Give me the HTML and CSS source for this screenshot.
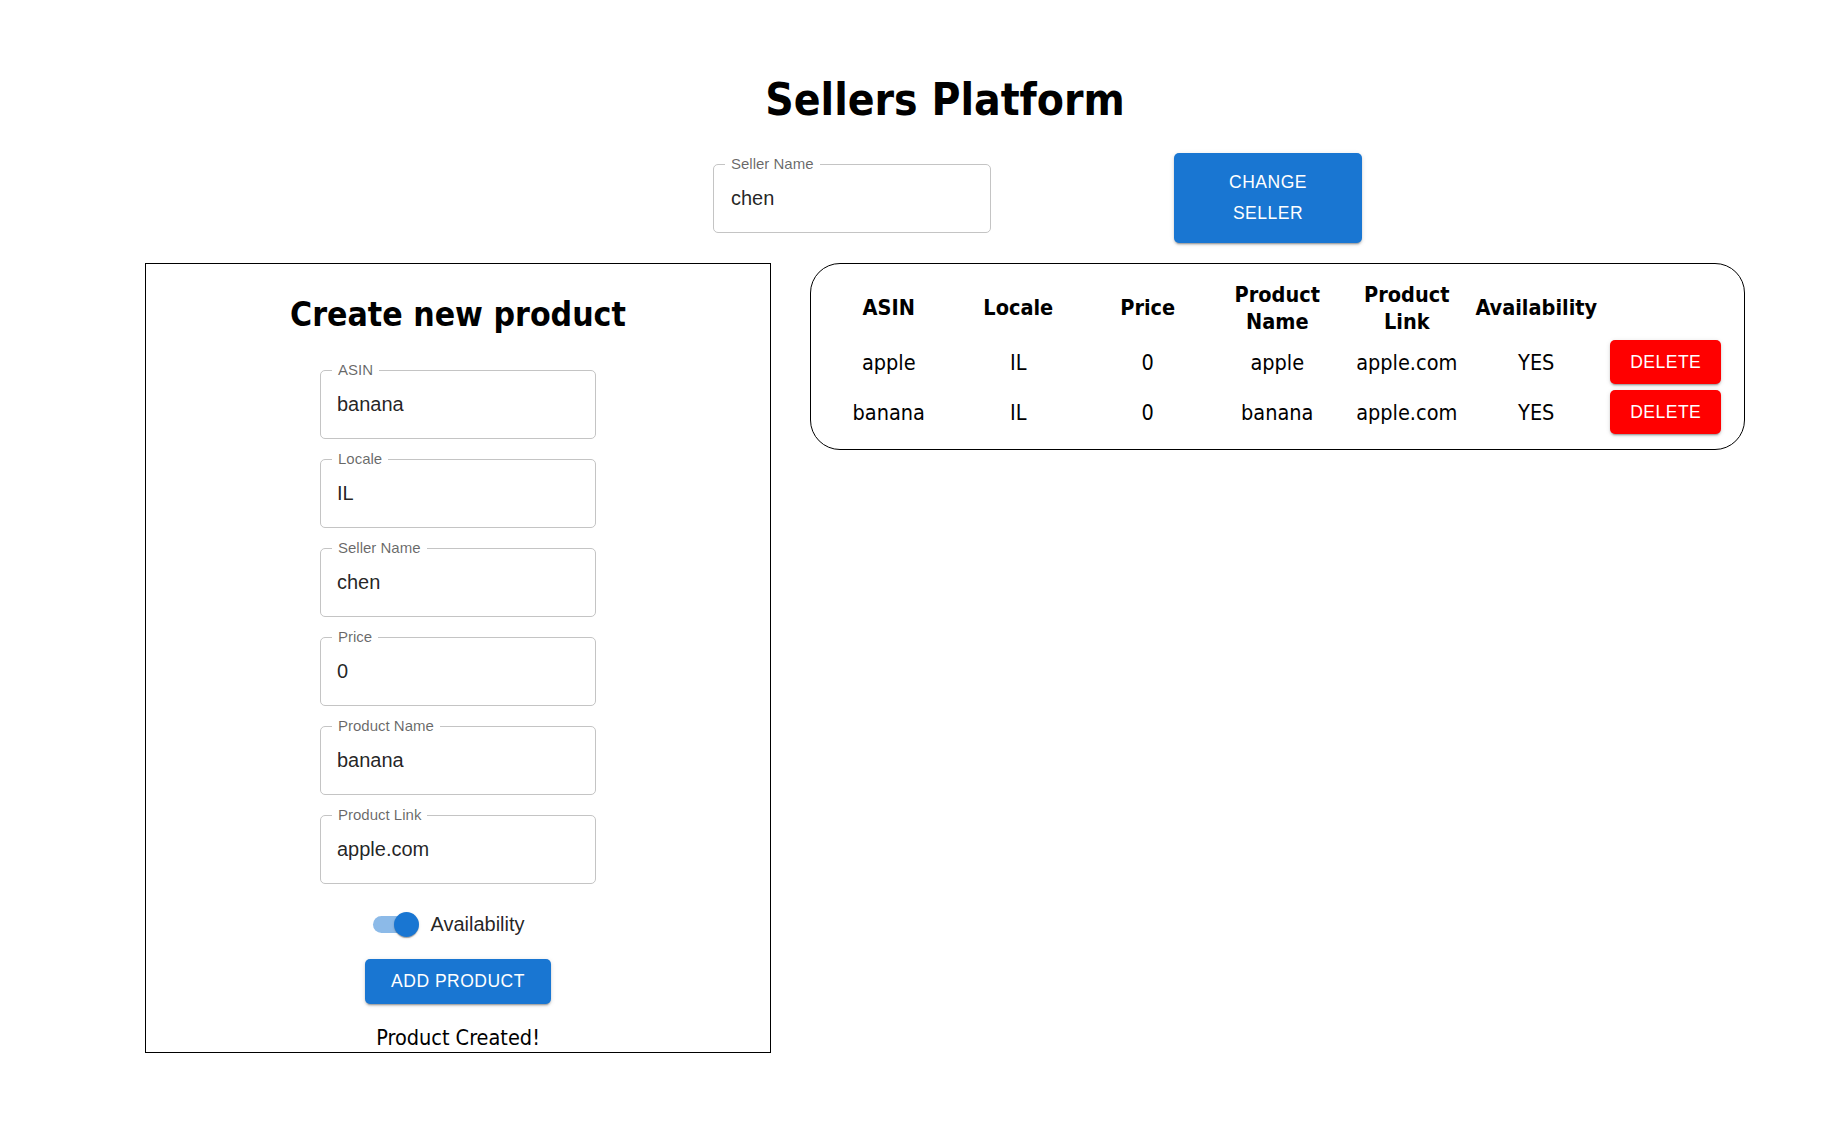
FILE: index.html
```html
<!DOCTYPE html>
<html lang="en">
<head>
<meta charset="utf-8">
<title>Sellers Platform</title>
<link rel="stylesheet" href="styles.css">
</head>
<body>
<div class="app">
  <h1 class="title">Sellers Platform</h1>
  <div class="seller-row">
    <div class="field field-top">
      <span class="field-label">Seller Name</span>
      <span class="field-value">chen</span>
    </div>
    <button class="btn btn-primary btn-change">CHANGE SELLER</button>
  </div>
  <div class="main-row">
    <section class="panel">
      <h2 class="panel-title">Create new product</h2>
      <div class="field"><span class="field-label">ASIN</span><span class="field-value">banana</span></div>
      <div class="field"><span class="field-label">Locale</span><span class="field-value">IL</span></div>
      <div class="field"><span class="field-label">Seller Name</span><span class="field-value">chen</span></div>
      <div class="field"><span class="field-label">Price</span><span class="field-value">0</span></div>
      <div class="field"><span class="field-label">Product Name</span><span class="field-value">banana</span></div>
      <div class="field"><span class="field-label">Product Link</span><span class="field-value">apple.com</span></div>
      <div class="switch-row">
        <span class="switch"><span class="switch-track"></span><span class="switch-thumb"></span></span>
        <span class="switch-label">Availability</span>
      </div>
      <button class="btn btn-primary btn-add">ADD PRODUCT</button>
      <p class="status">Product Created!</p>
    </section>
    <section class="table-card">
      <div class="grid">
        <div class="th">ASIN</div>
        <div class="th">Locale</div>
        <div class="th">Price</div>
        <div class="th">Product Name</div>
        <div class="th">Product Link</div>
        <div class="th">Availability</div>
        <div class="th"></div>

        <div class="td">apple</div>
        <div class="td">IL</div>
        <div class="td">0</div>
        <div class="td">apple</div>
        <div class="td">apple.com</div>
        <div class="td">YES</div>
        <div class="td"><button class="btn btn-delete">DELETE</button></div>

        <div class="td">banana</div>
        <div class="td">IL</div>
        <div class="td">0</div>
        <div class="td">banana</div>
        <div class="td">apple.com</div>
        <div class="td">YES</div>
        <div class="td"><button class="btn btn-delete">DELETE</button></div>
      </div>
    </section>
  </div>
</div>
</body>
</html>
```

FILE: styles.css
```css
html, body {
  margin: 0;
  padding: 0;
  background: #ffffff;
}

body {
  font-family: "DejaVu Sans Condensed", "DejaVu Sans", sans-serif;
  font-stretch: condensed;
  color: #000;
}

.app {
  width: 1600px;
  margin-left: 145px;
}

.title {
  margin: 74px 0 0;
  font-size: 44px;
  font-weight: bold;
  line-height: normal;
  text-align: center;
}

.seller-row {
  display: flex;
  align-items: center;
  margin-top: 28px;
  padding-left: 568px;
  gap: 183px;
}

.field {
  position: relative;
  box-sizing: border-box;
  width: 276px;
  height: 69px;
  border: 1px solid #c4c4c4;
  border-radius: 5px;
  display: flex;
  align-items: center;
  padding-left: 16px;
  font-family: "Liberation Sans", Arial, sans-serif;
  font-stretch: normal;
}

.field-top {
  width: 278px;
  padding-left: 17px;
}

.field-label {
  position: absolute;
  top: -10px;
  left: 11px;
  padding: 0 6px;
  background: #fff;
  font-size: 15px;
  line-height: 18px;
  color: rgba(0, 0, 0, 0.6);
}

.field-value {
  font-size: 20px;
  color: rgba(0, 0, 0, 0.87);
}

.btn {
  border: none;
  margin: 0;
  font-family: "Liberation Sans", Arial, sans-serif;
  font-stretch: normal;
  font-size: 17.5px;
  font-weight: 500;
  letter-spacing: 0.5px;
  color: #fff;
  border-radius: 5px;
  box-shadow: 0 3px 1px -2px rgba(0, 0, 0, 0.2), 0 2px 2px 0 rgba(0, 0, 0, 0.14), 0 1px 5px 0 rgba(0, 0, 0, 0.12);
  cursor: pointer;
}

.btn-primary {
  background: #1976d2;
}

.btn-change {
  box-sizing: border-box;
  width: 188px;
  height: 90px;
  padding: 0 20px;
  line-height: 31px;
  text-align: center;
}

.btn-add {
  box-sizing: border-box;
  height: 45px;
  padding: 0 26px;
  margin-top: 11px;
  line-height: 45px;
}

.btn-delete {
  box-sizing: border-box;
  width: 111px;
  height: 44px;
  padding: 0;
  background: #ff0000;
  line-height: 44px;
}

.main-row {
  display: flex;
  align-items: flex-start;
  gap: 39px;
  margin-top: 20px;
}

.panel {
  box-sizing: border-box;
  width: 626px;
  border: 1px solid #000;
  padding-bottom: 2px;
  display: flex;
  flex-direction: column;
  align-items: center;
}

.panel-title {
  margin: 31px 0 0;
  font-size: 33.5px;
  font-weight: bold;
  line-height: normal;
}

.panel .field {
  margin-top: 20px;
}

.panel .panel-title + .field {
  margin-top: 36px;
}

.switch-row {
  display: flex;
  align-items: center;
  height: 47px;
  margin-top: 17px;
  margin-right: 18px;
}

.switch {
  position: relative;
  width: 47px;
  height: 25px;
}

.switch-track {
  position: absolute;
  left: 0;
  top: 4px;
  width: 42px;
  height: 17px;
  border-radius: 9px;
  background: #8cbae8;
}

.switch-thumb {
  position: absolute;
  left: 21px;
  top: 0;
  width: 25px;
  height: 25px;
  border-radius: 50%;
  background: #1976d2;
  box-shadow: 0 2px 1px -1px rgba(0, 0, 0, 0.2), 0 1px 1px 0 rgba(0, 0, 0, 0.14), 0 1px 3px 0 rgba(0, 0, 0, 0.12);
}

.switch-label {
  margin-left: 10px;
  font-family: "Liberation Sans", Arial, sans-serif;
  font-stretch: normal;
  font-size: 20px;
  color: rgba(0, 0, 0, 0.87);
}

.status {
  margin: 21px 0 0;
  font-size: 21.5px;
  line-height: normal;
}

.table-card {
  box-sizing: border-box;
  width: 935px;
  border: 1px solid #000;
  border-radius: 30px;
  padding: 14px 13px 12px;
}

.grid {
  display: grid;
  grid-template-columns: repeat(7, 129.5px);
  grid-template-rows: 59px 50px 50px;
}

.th, .td {
  display: flex;
  align-items: center;
  justify-content: center;
  text-align: center;
  font-size: 21.5px;
}

.th {
  font-weight: bold;
  line-height: 27px;
}
```
